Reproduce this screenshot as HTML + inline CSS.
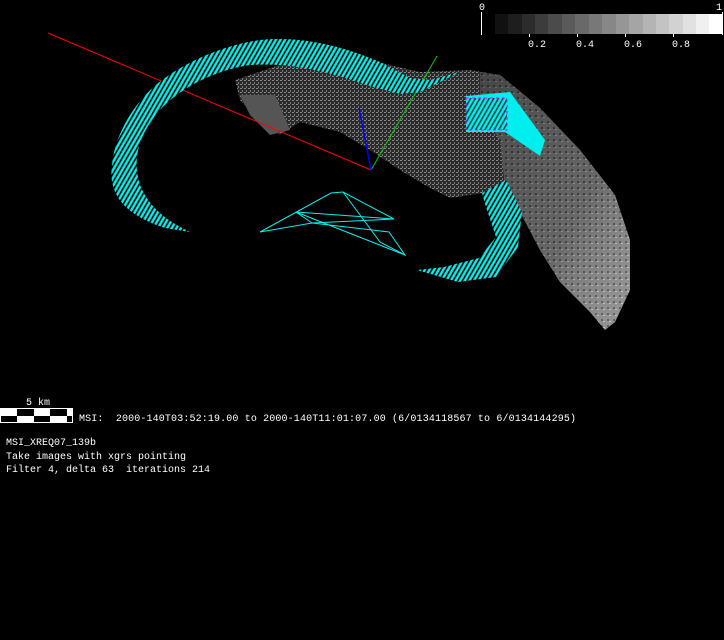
<!DOCTYPE html>
<html><head><style>
html,body{margin:0;padding:0;background:#000;width:724px;height:640px;overflow:hidden}
svg{position:absolute;left:0;top:0}
.t{font-family:"Liberation Mono",monospace;font-size:10px;fill:#fff;white-space:pre}
</style></head><body>
<svg width="724" height="640" viewBox="0 0 724 640" xml:space="preserve">
<defs>
<pattern id="h" width="4" height="4" patternUnits="userSpaceOnUse" patternTransform="rotate(30)">
<rect width="4" height="4" fill="#0ee"/><rect width="1.6" height="4" fill="#000"/>
</pattern>
<pattern id="m" width="4" height="4" patternUnits="userSpaceOnUse">
<rect width="4" height="4" fill="#2a2a2a"/><rect x="0" y="0" width="2" height="1" fill="#888"/><rect x="2" y="2" width="1" height="2" fill="#777"/>
</pattern>
<pattern id="m2" width="6" height="6" patternUnits="userSpaceOnUse">
<rect width="6" height="6" fill="#8a8a8a"/><rect x="1" y="1" width="2" height="2" fill="#555"/><rect x="3" y="3" width="2" height="1" fill="#c0c0c0"/>
</pattern>
<linearGradient id="g" x1="0" y1="0" x2="1" y2="1">
<stop offset="0" stop-color="#000" stop-opacity="0.5"/><stop offset="0.6" stop-color="#000" stop-opacity="0.25"/><stop offset="1" stop-color="#fff" stop-opacity="0.1"/>
</linearGradient>
</defs>
<path d="M235,80 L300,58 L360,58 L420,72 L470,70 L500,75 L540,108 L580,150 L615,195 L630,240 L630,290 L615,322 L605,330 L590,312 L560,282 L540,250 L520,212 L490,192 L450,198 L430,188 L400,170 L370,150 L340,132 L300,122 L280,135 L262,122 L240,100 Z" fill="url(#m)"/>
<path d="M480,72 L500,75 L540,108 L580,150 L615,195 L630,240 L630,290 L615,322 L605,330 L590,312 L560,282 L540,250 L520,212 L505,185 L500,140 L480,110 Z" fill="url(#m2)"/>
<path d="M480,72 L500,75 L540,108 L580,150 L615,195 L630,240 L630,290 L615,322 L605,330 L590,312 L560,282 L540,250 L520,212 L505,185 L500,140 L480,110 Z" fill="url(#g)"/>
<path d="M240,95 L275,95 L290,130 L270,135 L250,115 Z" fill="#555"/>
<line x1="48" y1="33" x2="371" y2="170" stroke="#f00" stroke-width="1"/>
<line x1="371" y1="170" x2="437" y2="56" stroke="#0c0" stroke-width="1"/>
<line x1="359" y1="108" x2="371" y2="170" stroke="#00f" stroke-width="1.5"/>
<path d="M190,232 L165,228 C125,215 108,195 112,165 C115,130 140,95 165,78 C190,60 225,45 260,40 C300,36 340,45 380,62 L410,78 L430,80 L460,72 L420,92 L400,94 L370,86 C330,72 290,62 250,65 C215,70 180,88 160,110 C138,135 132,160 140,185 C150,210 170,222 190,232 Z" fill="url(#h)"/>
<path d="M466,96 L510,92 L545,140 L540,156 L505,132 L466,132 Z" fill="#0ee"/>
<rect x="466" y="98" width="41" height="32" fill="url(#h)" opacity="0.7"/>
<rect x="466" y="98" width="41" height="32" fill="none" stroke="#f0f" stroke-width="1" stroke-dasharray="3,3"/>
<path d="M482,193 L506,180 L522,212 L518,247 L496,277 L458,282 L417,270 L444,267 L479,258 L496,237 L486,207 Z" fill="url(#h)"/>
<g stroke="#0ee" stroke-width="1" fill="none">
<polyline points="260,232 331,193 343,192 394,219 296,212 405,255 389,232 312,223 260,232"/>
<polyline points="343,192 380,242 405,255"/>
<polyline points="296,212 312,223 394,219"/>
</g>
<g>
<rect x="495" y="14" width="14" height="20" fill="#111"/>
<rect x="508" y="14" width="14" height="20" fill="#1e1e1e"/>
<rect x="522" y="14" width="14" height="20" fill="#2c2c2c"/>
<rect x="535" y="14" width="14" height="20" fill="#3c3c3c"/>
<rect x="548" y="14" width="14" height="20" fill="#4b4b4b"/>
<rect x="562" y="14" width="14" height="20" fill="#5a5a5a"/>
<rect x="575" y="14" width="14" height="20" fill="#696969"/>
<rect x="589" y="14" width="14" height="20" fill="#787878"/>
<rect x="602" y="14" width="14" height="20" fill="#878787"/>
<rect x="616" y="14" width="14" height="20" fill="#969696"/>
<rect x="629" y="14" width="14" height="20" fill="#a5a5a5"/>
<rect x="643" y="14" width="14" height="20" fill="#b4b4b4"/>
<rect x="656" y="14" width="14" height="20" fill="#c3c3c3"/>
<rect x="669" y="14" width="14" height="20" fill="#d2d2d2"/>
<rect x="683" y="14" width="14" height="20" fill="#e1e1e1"/>
<rect x="696" y="14" width="14" height="20" fill="#f0f0f0"/>
<rect x="709" y="14" width="13" height="20" fill="#fff"/>
<g stroke="#fff"><line x1="481.5" y1="12" x2="481.5" y2="35"/><line x1="722.5" y1="12" x2="722.5" y2="35"/>
<line x1="529.5" y1="34" x2="529.5" y2="37"/><line x1="577.5" y1="34" x2="577.5" y2="37"/><line x1="625.5" y1="34" x2="625.5" y2="37"/><line x1="673.5" y1="34" x2="673.5" y2="37"/></g>
<text class="t" x="479" y="10">0</text><text class="t" x="716" y="10">1</text>
<text class="t" x="528" y="47">0.2</text><text class="t" x="576" y="47">0.4</text><text class="t" x="624" y="47">0.6</text><text class="t" x="672" y="47">0.8</text>
</g>
<rect x="0" y="408" width="73" height="15" fill="#fff"/>
<rect x="17" y="409" width="17" height="7" fill="#000"/><rect x="50" y="409" width="17" height="7" fill="#000"/>
<rect x="1" y="416" width="16" height="6" fill="#000"/><rect x="34" y="416" width="16" height="6" fill="#000"/><rect x="67" y="416" width="5" height="6" fill="#000"/>
<text class="t" x="26" y="405">5 km</text>
<text class="t" x="79" y="421" textLength="497">MSI:  2000-140T03:52:19.00 to 2000-140T11:01:07.00 (6/0134118567 to 6/0134144295)</text>
<text class="t" x="6" y="445">MSI_XREQ07_139b</text>
<text class="t" x="6" y="459">Take images with xgrs pointing</text>
<text class="t" x="6" y="472">Filter 4, delta 63  iterations 214</text>
</svg>
</body></html>
